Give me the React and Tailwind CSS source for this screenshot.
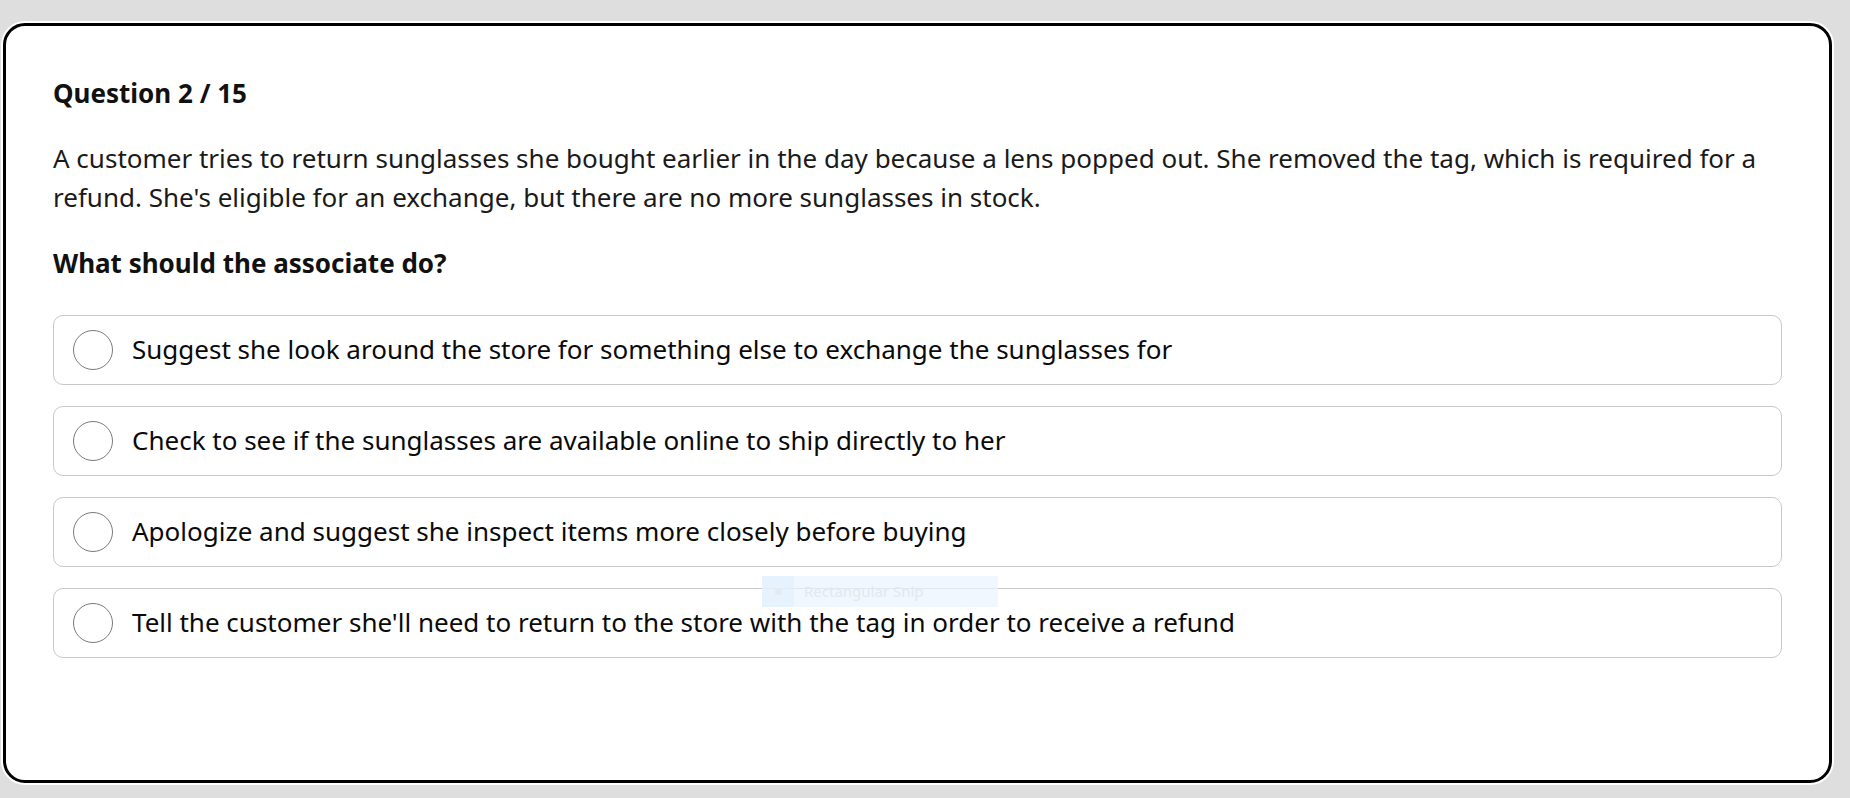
import React from "react";

const options = [
  "Suggest she look around the store for something else to exchange the sunglasses for",
  "Check to see if the sunglasses are available online to ship directly to her",
  "Apologize and suggest she inspect items more closely before buying",
  "Tell the customer she'll need to return to the store with the tag in order to receive a refund",
];

export default function App() {
  return (
    <div
      className="relative min-h-[798px] bg-[#dedede] pt-[23px] pl-[3px]"
      style={{ fontFamily: '"Noto Sans", "Open Sans", sans-serif' }}
    >
      <div className="w-[1829px] h-[760px] rounded-[22px] border-[3px] border-black bg-white shadow-[0_0_0_2px_#ffffff] px-[47px] pt-[49px]">
        <h2 className="text-[26px] leading-[36px] font-bold text-[#111111]">Question 2 / 15</h2>
        <p className="mt-[28px] text-[26px] leading-[39px] text-[#1a1a1a]">
          A customer tries to return sunglasses she bought earlier in the day because a lens popped out. She removed the tag, which is required for a refund. She's eligible for an exchange, but there are no more sunglasses in stock.
        </p>
        <h3 className="mt-[28px] text-[26px] leading-[36px] font-bold text-[#111111]">What should the associate do?</h3>
        <div className="mt-[34px] flex flex-col gap-[21px]">
          {options.map((o) => (
            <label
              key={o}
              className="flex h-[70px] items-center rounded-[10px] border border-[#c8c8c8] bg-white pl-[19px]"
            >
              <span className="h-[40px] w-[40px] shrink-0 rounded-full border-[1.5px] border-[#7a7a7a] bg-white" />
              <span className="ml-[19px] -mt-[2px] text-[26px] leading-[36px] text-[#0a0a0a]">{o}</span>
            </label>
          ))}
        </div>
      </div>
      <div className="pointer-events-none absolute left-[762px] top-[576px] flex h-[31px] w-[236px] items-center bg-[#eaf3fd]/70">
        <div className="flex h-full w-[32px] items-center justify-center bg-[#dfeefc]/60">
          <span className="h-[7px] w-[7px] rounded-full bg-[#e6e9ee]" />
        </div>
        <span className="ml-[10px] text-[15px] text-[#e3e8ee]" style={{ fontFamily: '"Noto Sans", sans-serif' }}>
          Rectangular Snip
        </span>
      </div>
    </div>
  );
}
